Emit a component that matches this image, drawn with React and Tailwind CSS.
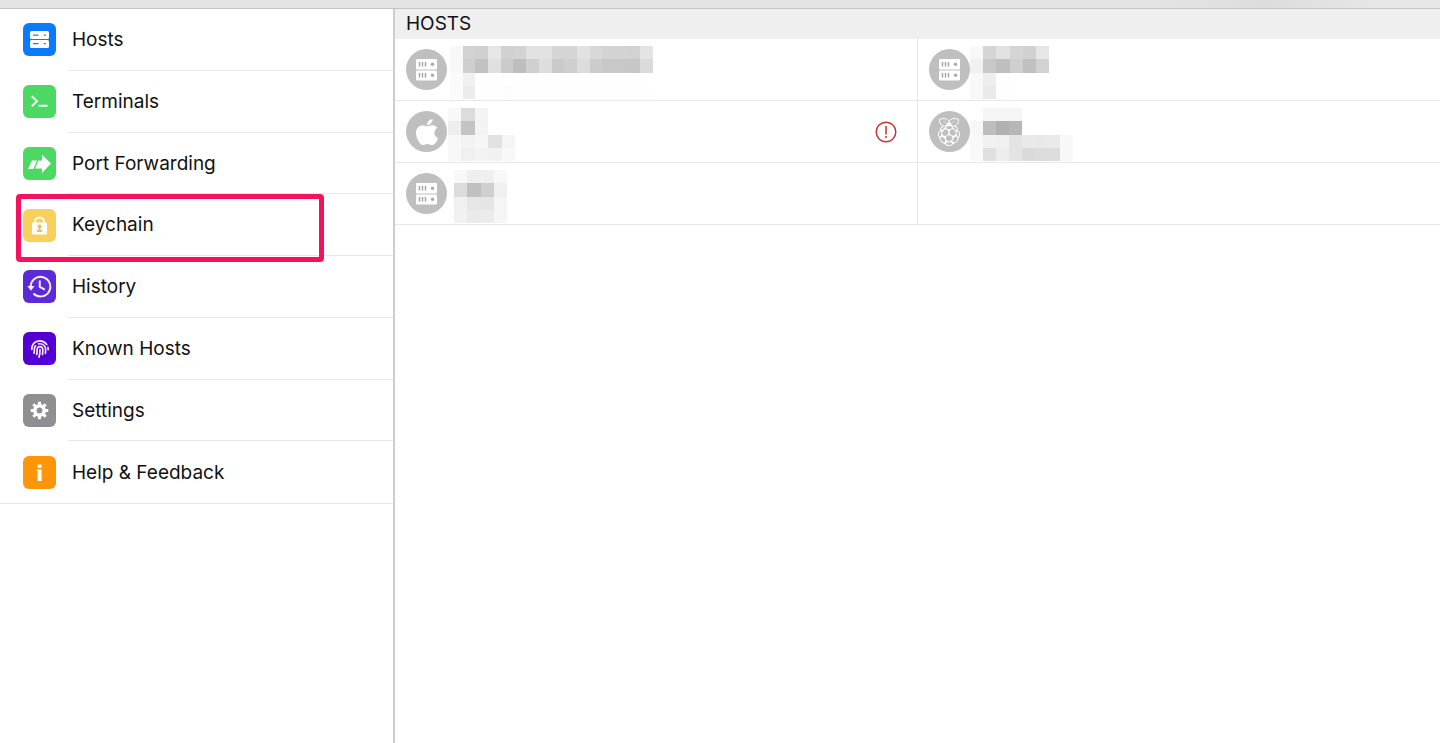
import React from 'react';
import { FaApple, FaFingerprint, FaRaspberryPi } from 'react-icons/fa';

const HostsIcon = () => (
  <svg viewBox="0 0 33 33" className="size-full">
    <rect x="7" y="8" width="19" height="8" rx="1.5" fill="#fff" />
    <rect x="7" y="17" width="19" height="8" rx="1.5" fill="#fff" />
    <path d="M10 12.2h5.5M10 20.6h5.5M20.8 12.2h2M20.8 20.6h2" stroke="#3b76c4" strokeWidth="1.3" />
  </svg>
);

const TerminalIcon = () => (
  <svg viewBox="0 0 33 33" className="size-full" fill="none" stroke="#effff0" strokeWidth="2">
    <path d="M8.8 11.3l5.2 5-5.2 5M15.5 20.8h9" />
  </svg>
);

const ForwardIcon = () => (
  <svg viewBox="0 0 33 33" className="size-full" fill="#fff">
    <path d="M9 13.5h5L10.300 22H5z" />
    <path d="M15.500 13.500h3.500V7.500L28 16.500 19 26v-4.500h-7z" />
  </svg>
);

const LockIcon = () => (
  <svg viewBox="0 0 33 33" className="size-full">
    <path d="M12 15v-2a4.500 4.500 0 0 1 9 0v2" fill="none" stroke="#fff" strokeWidth="2" />
    <rect x="9" y="13.500" width="15" height="12" rx="1" fill="#fff" />
    <circle cx="16.500" cy="17.500" r="1.900" fill="#f0c04f" />
    <path d="M15.700 19h1.600v1.800h1.900v2.200h-5.400v-2.200h1.900z" fill="#f0c04f" />
  </svg>
);

const HistoryIcon = () => (
  <svg viewBox="0 0 33 33" className="size-full" fill="none" stroke="#fbeaff" strokeWidth="2">
    <path d="M7.700 16.500A9.800 9.800 0 1 1 10.500 23.500M16.800 10.500v6.500l5 2.700" />
    <path d="M4.200 16h7.300L8 20.700z" fill="#fbeaff" stroke="none" />
  </svg>
);

const GearIcon = () => (
  <svg viewBox="0 0 33 33" className="size-full" fill="none" stroke="#fff">
    <circle cx="16.500" cy="16.500" r="4.600" strokeWidth="3.800" />
    <path
      d="M16.500 7.700v17.600M7.700 16.500h17.600M10.300 10.300l12.400 12.400M22.700 10.300L10.300 22.700"
      strokeWidth="3"
      strokeLinecap="butt"
    />
    <circle cx="16.500" cy="16.500" r="2.900" fill="#8e8e93" stroke="none" />
  </svg>
);

const InfoIcon = () => (
  <svg viewBox="0 0 33 33" className="size-full" fill="#fff">
    <rect x="14.600" y="8.500" width="4" height="3.500" rx="1" />
    <path d="M13.800 13.500h4.800V25h-4V15h-.8z" />
  </svg>
);

const ServerIcon = () => (
  <svg viewBox="0 0 41 41" className="size-full">
    <rect x="10" y="10" width="21" height="10.500" rx="1" fill="#fff" />
    <rect x="10" y="21.500" width="21" height="10" rx="1" fill="#fff" />
    <path
      d="M13.500 13v4.500M16.500 13v4.500M19.500 13v4.500M13.500 24v4.500M16.500 24v4.500M19.500 24v4.500"
      stroke="#a2a2a2"
      strokeWidth="1.400"
    />
    <circle cx="26.500" cy="15.200" r="1.700" fill="#a9a9a9" />
    <circle cx="26.500" cy="26.200" r="1.700" fill="#a9a9a9" />
  </svg>
);

const menu = [
  { label: 'Hosts', color: 'bg-[#0a7bfb]', icon: <HostsIcon /> },
  { label: 'Terminals', color: 'bg-[#4bd964]', icon: <TerminalIcon /> },
  { label: 'Port Forwarding', color: 'bg-[#4bd964]', icon: <ForwardIcon /> },
  { label: 'Keychain', color: 'bg-[#f9d05c]', icon: <LockIcon />, marked: true },
  { label: 'History', color: 'bg-[#5a2bd6]', icon: <HistoryIcon /> },
  { label: 'Known Hosts', color: 'bg-[#5400d2]', icon: <FaFingerprint className="size-[18px] text-[#fbeaff]" /> },
  { label: 'Settings', color: 'bg-[#8e8e93]', icon: <GearIcon /> },
  { label: 'Help & Feedback', color: 'bg-[#ff950a]', icon: <InfoIcon /> },
];

// Host names are redacted: each cell is a grey level in hex, row by row.
const hosts = [
  {
    name: 'Server 1',
    icon: <ServerIcon />,
    size: 'w-[203px] ml-[3px]',
    cells: [
      'f8 d2 d0 e6 d1 d3 e2 e2 d5 d5 e2 d8 d3 d3 d2 e4',
      'f8 cf c2 e0 cb be d0 dd ca cf dc cc c8 c8 c7 db',
      'fb f0 ff ff ff ff ff ff ff ff ff ff ff ff ff ff',
      'fb ec fe fe fd fe fe fe fe fe fe fe fe fe fe fe',
    ],
  },
  {
    name: 'Server 2',
    icon: <ServerIcon />,
    size: 'w-[79px]',
    cells: ['f8 d5 e2 d5 d1 e6', 'f1 c8 bf cf c0 d2', 'f8 ee fe ff ff ff', 'f8 ea fe ff ff ff'],
  },
  {
    name: 'Mac',
    icon: <FaApple className="size-[30px] text-white" />,
    size: 'w-[67px] ml-px',
    alert: true,
    cells: ['f8 dc f4 ff ff', 'ee c3 f3 ff ff', 'f8 f3 f6 e2 f5', 'f8 f0 f3 f1 f8'],
  },
  {
    name: 'Raspberry Pi',
    icon: <FaRaspberryPi className="size-7 text-white" />,
    size: 'w-[103px]',
    cells: [
      'ff f5 f5 f5 ff ff ff ff',
      'f7 bd b0 b7 ff ff ff ff',
      'f9 f1 f0 e3 e9 e8 ea f8',
      'f9 e0 ed e4 da dc dd f8',
    ],
  },
  {
    name: 'Server 3',
    icon: <ServerIcon />,
    size: 'w-[53px] ml-[7px]',
    cells: ['f8 ee ef f8', 'dc c0 cf f0', 'f0 e6 e5 f5', 'f1 ea eb f5'],
  },
];

const Mosaic = ({ rows, size }) => {
  const cols = rows[0].split(' ').length;
  return (
    <svg
      viewBox={`0 0 ${cols} ${rows.length}`}
      preserveAspectRatio="none"
      shapeRendering="crispEdges"
      className={`mt-1.5 h-[53px] ${size}`}
    >
      {rows.map((row, y) =>
        row.split(' ').map((c, x) => (
          <rect key={`${x}-${y}`} x={x} y={y} width="1" height="1" fill={`#${c}${c}${c}`} />
        ))
      )}
    </svg>
  );
};

const AlertIcon = () => (
  <svg viewBox="0 0 22 22" className="size-[22px]" fill="none" stroke="#c8302c" strokeWidth="1.400">
    <circle cx="11" cy="11" r="9.800" />
    <path d="M11 5v8.500M11 15v2" strokeWidth="1.500" />
  </svg>
);

const Sidebar = () => (
  <nav className="w-[395px] shrink-0 border-r-2 border-[#cdcdd0]">
    <ul className="grid min-h-[495px] auto-rows-fr border-b border-[#e8e8ea]">
      {menu.map((item, i) => (
        <li key={item.label} className="relative">
          <a href="#" className="flex h-full items-center pl-[23px]">
            <span className={`flex size-[33px] items-center justify-center rounded-md ${item.color}`}>
              {item.icon}
            </span>
            <span
              className={`ml-3 flex flex-1 items-center self-stretch pt-0.5 pl-1 text-[19px] ${
                i < menu.length - 1 ? 'border-b border-[#e8e8ea]' : ''
              }`}
            >
              {item.label}
            </span>
          </a>
          {item.marked && (
            <span className="pointer-events-none absolute top-0 -bottom-1.5 left-4 w-[308px] rounded-sm border-5 border-[#f4125f]" />
          )}
        </li>
      ))}
    </ul>
  </nav>
);

const Hosts = () => (
  <main className="min-w-0 flex-1">
    <h1 className="bg-[#efeff0] pl-[11px] text-[19px] leading-[30px]">HOSTS</h1>
    <ul className="grid grid-cols-2">
      {hosts.map((host) => (
        <li key={host.name} className="border-b border-[#e8e8ea] odd:border-r">
          <button aria-label={host.name} className="flex h-[61px] w-full items-center pr-5 pl-[11px]">
            <span className="flex size-[41px] items-center justify-center rounded-full bg-[#bfbfbf]">
              {host.icon}
            </span>
            <Mosaic rows={host.cells} size={host.size} />
            {host.alert && (
              <span className="ml-auto">
                <AlertIcon />
              </span>
            )}
          </button>
        </li>
      ))}
      <li className="border-b border-[#e8e8ea]" />
    </ul>
  </main>
);

const App = () => (
  <div className="flex min-h-screen flex-col bg-white font-['Inter',sans-serif] text-[#111]">
    <header className="h-[9px] border-b border-[#c4c4c6] bg-linear-to-r from-[#e4e4e4] from-80% via-[#dddddd] via-88% to-[#e6e6e6] to-95%" />
    <div className="flex flex-1">
      <Sidebar />
      <Hosts />
    </div>
  </div>
);

export default App;
